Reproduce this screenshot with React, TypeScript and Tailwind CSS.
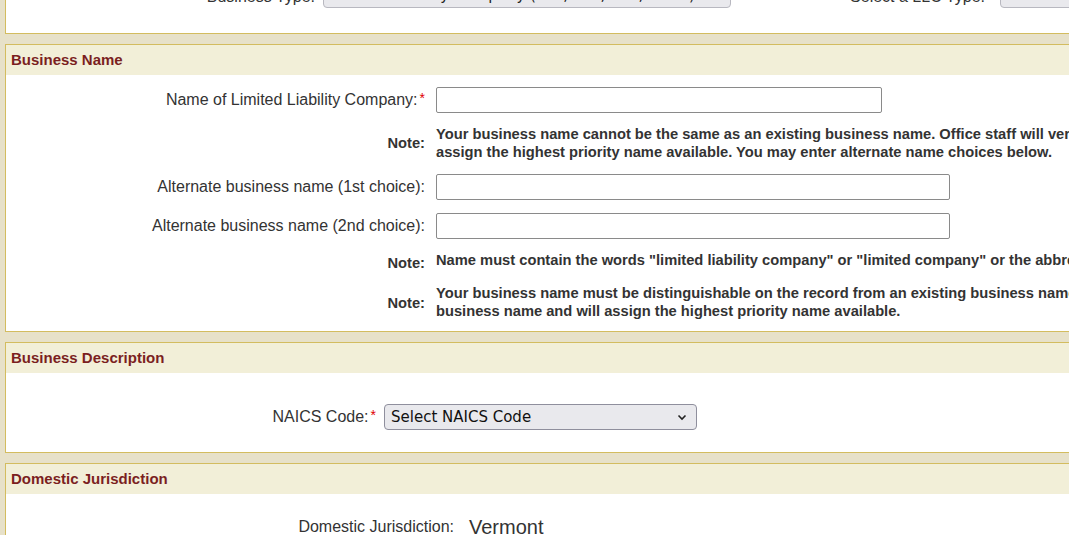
import type { ReactNode } from 'react'

const FONT = { fontFamily: '"Liberation Sans", Arial, sans-serif' }
const SELECT_FONT = { fontFamily: '"DejaVu Sans", Verdana, sans-serif', fontSize: 15 }

function Panel({ title, children }: { title: string; children: ReactNode }) {
  return (
    <div className="mt-[10px] w-[1200px] border border-[#d3bc5f] bg-white">
      <div className="h-[30px] bg-[#f2efd8] px-[5px] flex items-center text-[15px] font-bold text-[#7b1f1f]">
        {title}
      </div>
      {children}
    </div>
  )
}

function Req() {
  return <span className="text-[#e00000] text-[14px] align-top ml-[2px]">*</span>
}

function Note({ lines, className = '' }: { lines: string[]; className?: string }) {
  return (
    <>
      <div className={`text-right text-[14.7px] font-bold text-[#333] self-center ${className}`}>Note:</div>
      <div className={`text-[14.7px] font-bold text-[#333] leading-[17.5px] whitespace-nowrap ${className}`}>
        {lines.map((l) => (
          <div key={l}>{l}</div>
        ))}
      </div>
    </>
  )
}

function Field({ label, req, width }: { label: string; req?: boolean; width: number }) {
  return (
    <>
      <div className="text-right text-[16px] text-[#333] self-center whitespace-nowrap">
        {label}
        {req && <Req />}
      </div>
      <input
        type="text"
        style={{ width }}
        className="h-[26px] border border-[#8a8a8a] rounded-[2px] bg-white"
      />
    </>
  )
}

export default function App() {
  return (
    <div className="h-[535px] overflow-hidden bg-[#e7e1c9] pl-[5px]" style={FONT}>
      {/* previous section, scrolled mostly out of view */}
      <div className="mt-[-41px] w-[1200px] h-[75px] border border-[#d3bc5f] bg-white flex items-start pt-[22px]">
        <div className="w-[309px] text-right text-[16px] text-[#333] pt-[3px]">Business Type:</div>
        <div
          className="ml-[8px] w-[408px] h-[26px] rounded-[4px] border border-[#b8b8c0] bg-[#e9e9ed] px-[6px] text-[#222] flex items-center whitespace-nowrap overflow-hidden"
          style={SELECT_FONT}
        >
          Limited Liability Company (LLC, PLC, L3C,BLLLC)
        </div>
        <div className="w-[254px] text-right text-[16px] text-[#333] pt-[3px]">Select a LLC Type:</div>
        <div
          className="ml-[15px] w-[200px] h-[26px] rounded-[4px] border border-[#b8b8c0] bg-[#e9e9ed] px-[6px] text-[#222] flex items-center whitespace-nowrap"
          style={SELECT_FONT}
        >
          Limited Liability Company
        </div>
      </div>

      <Panel title="Business Name">
        <div className="grid grid-cols-[419px_auto] justify-start gap-x-[11px] gap-y-[13px] pt-[12px] pb-[11px]">
          <Field label="Name of Limited Liability Company:" req width={446} />
          <Note
            lines={[
              'Your business name cannot be the same as an existing business name. Office staff will verify and',
              'assign the highest priority name available. You may enter alternate name choices below.',
            ]}
          />
          <Field label="Alternate business name (1st choice):" width={514} />
          <Field label="Alternate business name (2nd choice):" width={514} />
          <Note
            lines={[
              'Name must contain the words "limited liability company" or "limited company" or the abbreviation "LLC".',
            ]}
          />
          <Note
            className="-mt-[2px]"
            lines={[
              'Your business name must be distinguishable on the record from an existing business name. Office staff will verify your',
              'business name and will assign the highest priority name available.',
            ]}
          />
        </div>
      </Panel>

      <Panel title="Business Description">
        <div className="flex items-center pt-[31px] pb-[22px]">
          <div className="w-[370px] text-right text-[16px] text-[#333]">
            NAICS Code:
            <Req />
          </div>
          <div
            className="ml-[8px] w-[313px] h-[26px] rounded-[4px] border border-[#8f8f9d] bg-[#e9e9ed] pl-[6px] pr-[8px] flex items-center justify-between text-[#111]"
            style={SELECT_FONT}
          >
            <span>Select NAICS Code</span>
            <svg width="12" height="12" viewBox="0 0 12 12" fill="none" stroke="#222" strokeWidth="1.6">
              <path d="M2.5 4.5 6 8l3.5-3.5" />
            </svg>
          </div>
        </div>
      </Panel>

      <Panel title="Domestic Jurisdiction">
        <div className="flex items-center pt-[18px] pb-[20px]">
          <div className="w-[448px] text-right text-[16px] text-[#333]">Domestic Jurisdiction:</div>
          <div className="ml-[15px] text-[20px] text-[#333]">Vermont</div>
        </div>
      </Panel>
    </div>
  )
}
